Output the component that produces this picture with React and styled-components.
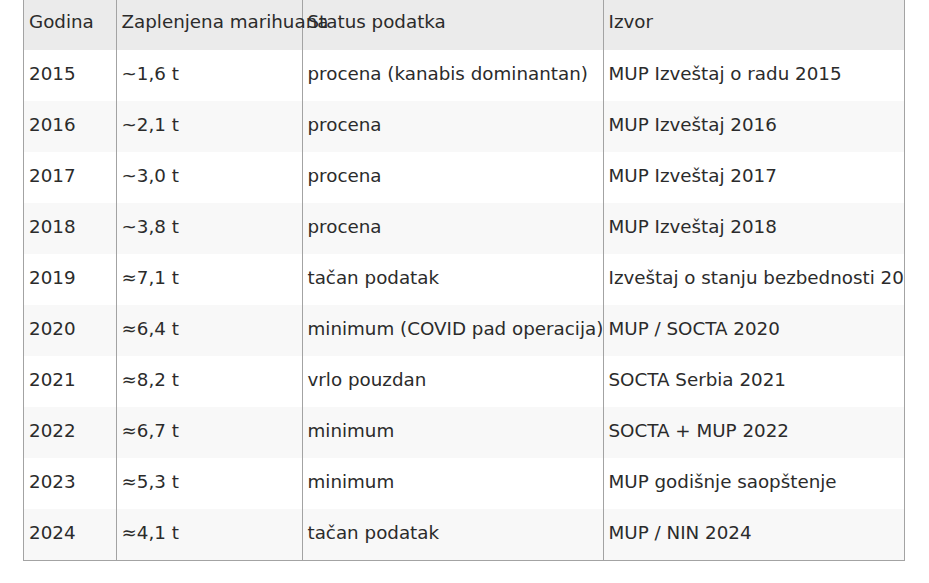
import React from "react";
import styled, { createGlobalStyle } from "styled-components";

// 기본 페이지 스타일
const GlobalStyle = createGlobalStyle`
  html, body {
    margin: 0;
    padding: 0;
    background: #ffffff;
  }
  body {
    font-family: "DejaVu Sans", "Liberation Sans", sans-serif;
    color: #2b2b2b;
  }
`;

// 테이블 외곽 래퍼: 오른쪽 넘치는 글자는 잘림
const TableFrame = styled.div`
  width: 880px;
  margin: -4px 0 0 23px;
  border: 1px solid #a3a3a3;
  overflow: hidden;
`;

const Table = styled.table`
  width: 880px;
  table-layout: fixed;
  border-collapse: collapse;
  font-size: 18.3px;
  line-height: 22px;
`;

const Col = styled.col`
  width: ${(p) => p.$w}px;
`;

const HeadRow = styled.tr`
  background: #ebebeb;
  height: 53px;
`;

const Row = styled.tr`
  background: ${(p) => (p.$striped ? "#f8f8f8" : "#ffffff")};
  height: 51px;
`;

const Cell = styled.td`
  padding: 0 5px 3px 5px;
  font-weight: normal;
  text-align: left;
  white-space: nowrap;
  overflow: visible;
  vertical-align: middle;
  border-left: ${(p) => (p.$first ? "none" : "1px solid #a3a3a3")};
`;

const HeadCell = styled(Cell).attrs({ as: "th" })`
  padding-top: 3px;
  padding-bottom: 6px;
`;

const columns = [92, 186, 301, 301];

const headers = ["Godina", "Zaplenjena marihuana", "Status podatka", "Izvor"];

const rows = [
  ["2015", "~1,6 t", "procena (kanabis dominantan)", "MUP Izveštaj o radu 2015"],
  ["2016", "~2,1 t", "procena", "MUP Izveštaj 2016"],
  ["2017", "~3,0 t", "procena", "MUP Izveštaj 2017"],
  ["2018", "~3,8 t", "procena", "MUP Izveštaj 2018"],
  ["2019", "≈7,1 t", "tačan podatak", "Izveštaj o stanju bezbednosti 2019"],
  ["2020", "≈6,4 t", "minimum (COVID pad operacija)", "MUP / SOCTA 2020"],
  ["2021", "≈8,2 t", "vrlo pouzdan", "SOCTA Serbia 2021"],
  ["2022", "≈6,7 t", "minimum", "SOCTA + MUP 2022"],
  ["2023", "≈5,3 t", "minimum", "MUP godišnje saopštenje"],
  ["2024", "≈4,1 t", "tačan podatak", "MUP / NIN 2024"],
];

export default function App() {
  return (
    <>
      <GlobalStyle />
      <TableFrame>
        <Table>
          <colgroup>
            {columns.map((w, i) => (
              <Col key={i} $w={w} />
            ))}
          </colgroup>
          <thead>
            <HeadRow>
              {headers.map((h, i) => (
                <HeadCell key={h} $first={i === 0}>
                  {h}
                </HeadCell>
              ))}
            </HeadRow>
          </thead>
          <tbody>
            {rows.map((r, idx) => (
              <Row key={r[0]} $striped={idx % 2 === 1}>
                {r.map((c, i) => (
                  <Cell key={i} $first={i === 0}>
                    {c}
                  </Cell>
                ))}
              </Row>
            ))}
          </tbody>
        </Table>
      </TableFrame>
    </>
  );
}
